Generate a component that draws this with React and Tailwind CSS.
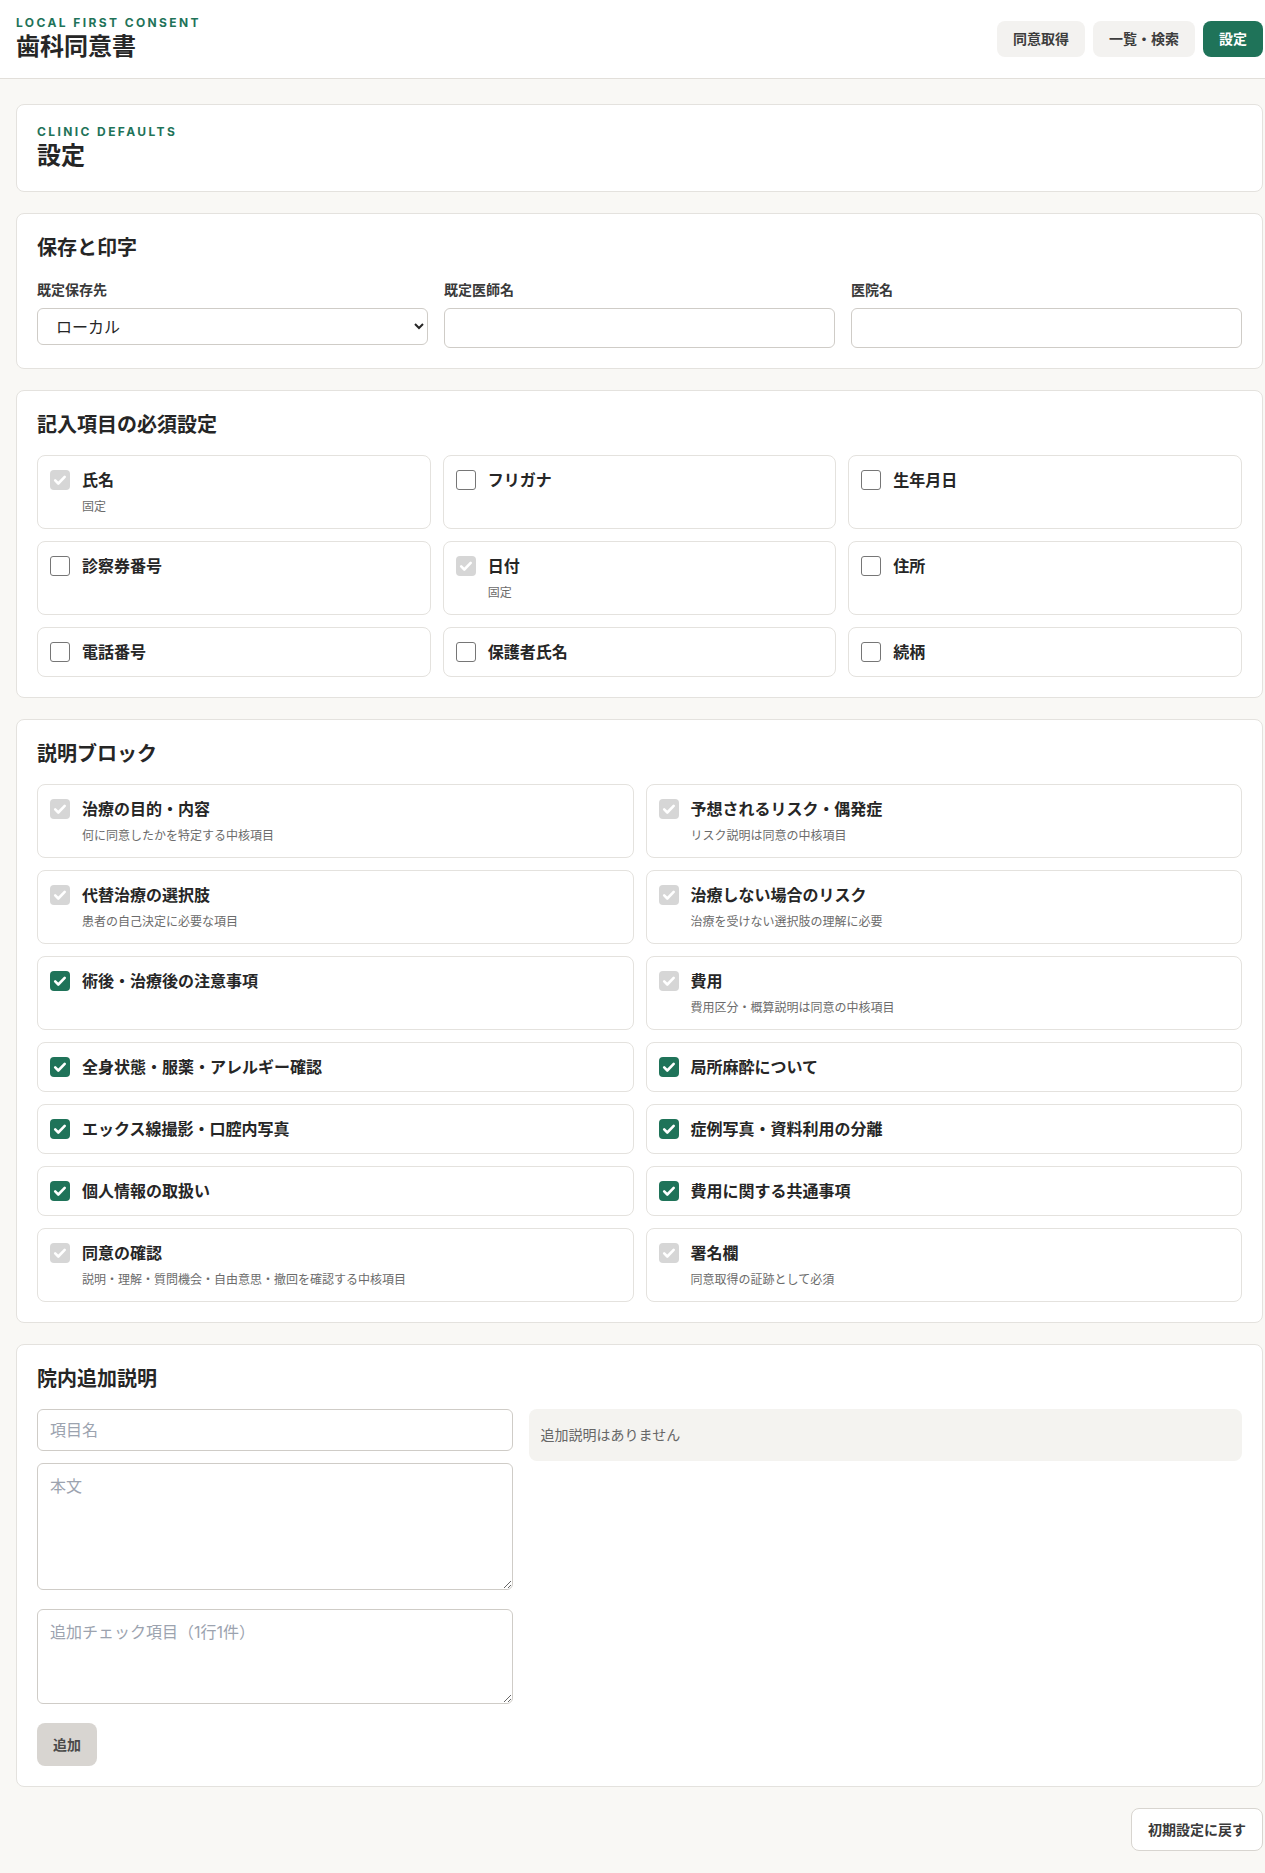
import { useState } from 'react';

const FONT = "font-['Inter','Noto_Sans_CJK_JP',sans-serif]";

const FIELDS = [
  { label: '氏名', sub: '固定', state: 'locked' },
  { label: 'フリガナ', state: 'off' },
  { label: '生年月日', state: 'off' },
  { label: '診察券番号', state: 'off' },
  { label: '日付', sub: '固定', state: 'locked' },
  { label: '住所', state: 'off' },
  { label: '電話番号', state: 'off' },
  { label: '保護者氏名', state: 'off' },
  { label: '続柄', state: 'off' },
];

const BLOCKS = [
  { label: '治療の目的・内容', sub: '何に同意したかを特定する中核項目', state: 'locked' },
  { label: '予想されるリスク・偶発症', sub: 'リスク説明は同意の中核項目', state: 'locked' },
  { label: '代替治療の選択肢', sub: '患者の自己決定に必要な項目', state: 'locked' },
  { label: '治療しない場合のリスク', sub: '治療を受けない選択肢の理解に必要', state: 'locked' },
  { label: '術後・治療後の注意事項', state: 'on' },
  { label: '費用', sub: '費用区分・概算説明は同意の中核項目', state: 'locked' },
  { label: '全身状態・服薬・アレルギー確認', state: 'on' },
  { label: '局所麻酔について', state: 'on' },
  { label: 'エックス線撮影・口腔内写真', state: 'on' },
  { label: '症例写真・資料利用の分離', state: 'on' },
  { label: '個人情報の取扱い', state: 'on' },
  { label: '費用に関する共通事項', state: 'on' },
  { label: '同意の確認', sub: '説明・理解・質問機会・自由意思・撤回を確認する中核項目', state: 'locked' },
  { label: '署名欄', sub: '同意取得の証跡として必須', state: 'locked' },
];

function Check({ state, onClick }) {
  if (state === 'off') {
    return (
      <button
        type="button"
        onClick={onClick}
        className="mt-0.5 h-5 w-5 shrink-0 rounded-[3px] border border-[#767676] bg-white"
      />
    );
  }
  return (
    <button
      type="button"
      onClick={onClick}
      disabled={state === 'locked'}
      className={
        'mt-0.5 flex h-5 w-5 shrink-0 items-center justify-center rounded-[4px] ' +
        (state === 'locked' ? 'bg-[#d6d6d6]' : 'bg-[#1f7359]')
      }
    >
      <svg viewBox="0 0 20 20" className="h-5 w-5" fill="none">
        <path d="M5.2 10.4l3.1 3.1 6.4-6.6" stroke="white" strokeWidth="2.6" strokeLinecap="round" strokeLinejoin="round" />
      </svg>
    </button>
  );
}

function Item({ item, onToggle }) {
  return (
    <div className="flex items-start gap-3 rounded-lg border border-[#e4e2de] bg-white p-3">
      <Check state={item.state} onClick={onToggle} />
      <div>
        <div className="text-base font-bold leading-6 text-[#262626]">{item.label}</div>
        {item.sub && <div className="mt-[5px] text-xs leading-[19px] text-[#6b6b6b]">{item.sub}</div>}
      </div>
    </div>
  );
}

function Card({ title, children }) {
  return (
    <section className="rounded-lg border border-[#e4e2de] bg-white p-5">
      {title && <h2 className="mb-4 text-xl font-bold leading-7 text-[#262626]">{title}</h2>}
      {children}
    </section>
  );
}

export default function App() {
  const [fields, setFields] = useState(FIELDS);
  const [blocks, setBlocks] = useState(BLOCKS);

  const toggle = (list, setList, i) => {
    const next = [...list];
    if (next[i].state === 'locked') return;
    next[i] = { ...next[i], state: next[i].state === 'on' ? 'off' : 'on' };
    setList(next);
  };

  return (
    <div className={`${FONT} min-h-screen bg-[#f9f8f5] text-[#262626]`}>
      {/* Top bar */}
      <header className="flex h-[79px] items-center justify-between border-b border-[#e2dfda] bg-white pl-4 pr-[2px]">
        <div>
          <div className="text-[12px] font-bold leading-[13px] tracking-[0.2em] text-[#1f7359]">LOCAL FIRST CONSENT</div>
          <h1 className="mt-[3px] text-2xl font-bold leading-[30px]">歯科同意書</h1>
        </div>
        <nav className="flex gap-2">
          <button className="h-9 rounded-lg bg-[#f3f2f0] px-4 text-sm font-bold text-[#3d3d3d]">同意取得</button>
          <button className="h-9 rounded-lg bg-[#f3f2f0] px-4 text-sm font-bold text-[#3d3d3d]">一覧・検索</button>
          <button className="h-9 rounded-lg bg-[#1f7359] px-4 text-sm font-bold text-white">設定</button>
        </nav>
      </header>

      <main className="flex flex-col gap-[21px] pb-[25px] pl-4 pr-[2px] pt-[25px]">
        <Card>
          <div className="text-[12px] font-bold leading-[13px] tracking-[0.2em] text-[#1f7359]">CLINIC DEFAULTS</div>
          <h1 className="mt-[3px] text-2xl font-bold leading-[30px]">設定</h1>
        </Card>

        <Card title="保存と印字">
          <div className="grid grid-cols-3 gap-4 pt-0.5">
            <div>
              <label className="mb-2 block text-sm font-bold leading-5 text-[#3a3a3a]">既定保存先</label>
              <select className="h-[37px] w-full rounded-md border border-[#cfccc7] bg-white px-3.5 text-base">
                <option>ローカル</option>
              </select>
            </div>
            <div>
              <label className="mb-2 block text-sm font-bold leading-5 text-[#3a3a3a]">既定医師名</label>
              <input className="h-10 w-full rounded-md border border-[#cfccc7] bg-white px-3 text-base" />
            </div>
            <div>
              <label className="mb-2 block text-sm font-bold leading-5 text-[#3a3a3a]">医院名</label>
              <input className="h-10 w-full rounded-md border border-[#cfccc7] bg-white px-3 text-base" />
            </div>
          </div>
        </Card>

        <Card title="記入項目の必須設定">
          <div className="grid grid-cols-3 gap-3">
            {fields.map((f, i) => (
              <Item key={f.label} item={f} onToggle={() => toggle(fields, setFields, i)} />
            ))}
          </div>
        </Card>

        <Card title="説明ブロック">
          <div className="grid grid-cols-2 gap-3">
            {blocks.map((b, i) => (
              <Item key={b.label} item={b} onToggle={() => toggle(blocks, setBlocks, i)} />
            ))}
          </div>
        </Card>

        <Card title="院内追加説明">
          <div className="grid grid-cols-[2fr_3fr] items-start gap-4">
            <div className="flex flex-col">
              <input
                placeholder="項目名"
                className="h-[42px] w-full rounded-md border border-[#cfccc7] px-3 text-base placeholder:text-[#9ca3af]"
              />
              <textarea
                placeholder="本文"
                className="mt-3 h-[127px] w-full rounded-md border border-[#cfccc7] px-3 py-2.5 text-base placeholder:text-[#9ca3af]"
              />
              <textarea
                placeholder="追加チェック項目（1行1件）"
                className="mt-[19px] h-[95px] w-full rounded-md border border-[#cfccc7] px-3 py-2.5 text-base placeholder:text-[#9ca3af]"
              />
              <button className="mt-[19px] h-[43px] w-[60px] rounded-lg bg-[#d8d5d1] text-sm font-bold text-[#4a4a4a]">追加</button>
            </div>
            <div className="flex h-[52px] items-center rounded-lg bg-[#f4f3f0] px-3 text-sm text-[#666]">追加説明はありません</div>
          </div>
        </Card>

        <div className="flex justify-end">
          <button className="h-[43px] rounded-lg border border-[#d8d5d0] bg-white px-4 text-sm font-bold text-[#3a3a3a]">
            初期設定に戻す
          </button>
        </div>
      </main>
    </div>
  );
}
